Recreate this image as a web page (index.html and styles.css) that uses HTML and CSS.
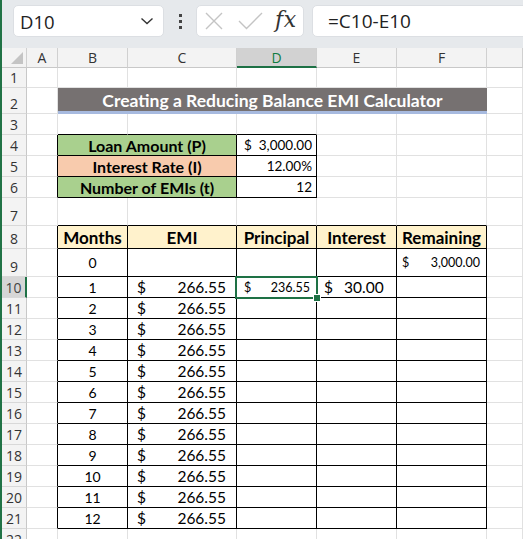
FILE: index.html
```html
<!DOCTYPE html>
<html>
<head>
<meta charset="utf-8">
<link rel="stylesheet" href="styles.css">
</head>
<body>
<div class="app">
  <div class="topbar">
    <div class="namebox">
      <span class="nb-text">D10</span>
      <svg class="chev" width="14" height="8" viewBox="0 0 14 8"><path d="M1.5 1.5 L7 6.5 L12.5 1.5" fill="none" stroke="#333" stroke-width="1.4"/></svg>
    </div>
    <div class="dots"><span></span><span></span><span></span></div>
    <div class="fxbox">
      <svg width="18" height="18" viewBox="0 0 18 18"><path d="M1 1 L17 17 M17 1 L1 17" stroke="#c4c4c4" stroke-width="1.4" fill="none"/></svg>
      <svg width="25" height="18" viewBox="0 0 25 18"><path d="M1 9 L8.5 16.5 L24 1" stroke="#c4c4c4" stroke-width="1.4" fill="none"/></svg>
      <span class="fx">fx</span>
    </div>
    <div class="formula">=C10-E10</div>
  </div>

  <div class="sheet">
    <!-- column header -->
    <div class="ch corner"><span class="tri"></span></div>
    <div class="ch">A</div>
    <div class="ch">B</div>
    <div class="ch">C</div>
    <div class="ch chsel">D</div>
    <div class="ch">E</div>
    <div class="ch">F</div>
    <div class="ch"></div>

    <!-- row 1 -->
    <div class="rh">1</div>
    <div class="c"></div><div class="c"></div><div class="c"></div><div class="c"></div><div class="c"></div><div class="c"></div><div class="c"></div>

    <!-- row 2 -->
    <div class="rh">2</div>
    <div class="c"></div>
    <div class="title">Creating a Reducing Balance EMI Calculator</div>
    <div class="c"></div>

    <!-- row 3 -->
    <div class="rh">3</div>
    <div class="c"></div><div class="c bb"></div><div class="c bb"></div><div class="c bb"></div><div class="c"></div><div class="c"></div><div class="c"></div>

    <!-- row 4 -->
    <div class="rh">4</div>
    <div class="c br"></div>
    <div class="t lbl green">Loan Amount (P)</div>
    <div class="t val acct4"><span>$</span><span>3,000.00</span></div>
    <div class="c"></div><div class="c"></div><div class="c"></div>

    <!-- row 5 -->
    <div class="rh">5</div>
    <div class="c br"></div>
    <div class="t lbl peach">Interest Rate (I)</div>
    <div class="t val right">12.00%</div>
    <div class="c"></div><div class="c"></div><div class="c"></div>

    <!-- row 6 -->
    <div class="rh">6</div>
    <div class="c br"></div>
    <div class="t lbl green">Number of EMIs (t)</div>
    <div class="t val right">12</div>
    <div class="c"></div><div class="c"></div><div class="c"></div>

    <!-- row 7 -->
    <div class="rh">7</div>
    <div class="c"></div><div class="c bb"></div><div class="c bb"></div><div class="c bb"></div><div class="c bb"></div><div class="c bb"></div><div class="c"></div>

    <!-- row 8 -->
    <div class="rh">8</div>
    <div class="c br"></div>
    <div class="t hd">Months</div>
    <div class="t hd">EMI</div>
    <div class="t hd">Principal</div>
    <div class="t hd">Interest</div>
    <div class="t hd">Remaining</div>
    <div class="c"></div>

    <!-- row 9 -->
    <div class="rh">9</div>
    <div class="c br"></div>
    <div class="t num">0</div>
    <div class="t"></div>
    <div class="t"></div>
    <div class="t"></div>
    <div class="t acct-s accF"><span>$</span><span>3,000.00</span></div>
    <div class="c"></div>

    <!-- row 10 -->
    <div class="rh rhsel">10</div>
    <div class="c br"></div>
    <div class="t num">1</div>
    <div class="t acct"><span>$</span><span>266.55</span></div>
    <div class="t acct-s accD sel"><span>$</span><span>236.55</span></div>
    <div class="t acct accE"><span>$</span><span>30.00</span></div>
    <div class="t"></div>
    <div class="c"></div>

    <div class="rh">11</div><div class="c br"></div><div class="t num">2</div><div class="t acct"><span>$</span><span>266.55</span></div><div class="t"></div><div class="t"></div><div class="t"></div><div class="c"></div>
    <div class="rh">12</div><div class="c br"></div><div class="t num">3</div><div class="t acct"><span>$</span><span>266.55</span></div><div class="t"></div><div class="t"></div><div class="t"></div><div class="c"></div>
    <div class="rh">13</div><div class="c br"></div><div class="t num">4</div><div class="t acct"><span>$</span><span>266.55</span></div><div class="t"></div><div class="t"></div><div class="t"></div><div class="c"></div>
    <div class="rh">14</div><div class="c br"></div><div class="t num">5</div><div class="t acct"><span>$</span><span>266.55</span></div><div class="t"></div><div class="t"></div><div class="t"></div><div class="c"></div>
    <div class="rh">15</div><div class="c br"></div><div class="t num">6</div><div class="t acct"><span>$</span><span>266.55</span></div><div class="t"></div><div class="t"></div><div class="t"></div><div class="c"></div>
    <div class="rh">16</div><div class="c br"></div><div class="t num">7</div><div class="t acct"><span>$</span><span>266.55</span></div><div class="t"></div><div class="t"></div><div class="t"></div><div class="c"></div>
    <div class="rh">17</div><div class="c br"></div><div class="t num">8</div><div class="t acct"><span>$</span><span>266.55</span></div><div class="t"></div><div class="t"></div><div class="t"></div><div class="c"></div>
    <div class="rh">18</div><div class="c br"></div><div class="t num">9</div><div class="t acct"><span>$</span><span>266.55</span></div><div class="t"></div><div class="t"></div><div class="t"></div><div class="c"></div>
    <div class="rh">19</div><div class="c br"></div><div class="t num">10</div><div class="t acct"><span>$</span><span>266.55</span></div><div class="t"></div><div class="t"></div><div class="t"></div><div class="c"></div>
    <div class="rh">20</div><div class="c br"></div><div class="t num">11</div><div class="t acct"><span>$</span><span>266.55</span></div><div class="t"></div><div class="t"></div><div class="t"></div><div class="c"></div>
    <div class="rh">21</div><div class="c br"></div><div class="t num">12</div><div class="t acct"><span>$</span><span>266.55</span></div><div class="t"></div><div class="t"></div><div class="t"></div><div class="c"></div>

    <div class="rh">22</div>
    <div class="c"></div><div class="c"></div><div class="c"></div><div class="c"></div><div class="c"></div><div class="c"></div><div class="c"></div>
  </div>
</div>
</body>
</html>
```
FILE: styles.css
```css
html, body {
  margin: 0;
  padding: 0;
  background: #ffffff;
  overflow: hidden;
}
.app {
  width: 523px;
  height: 539px;
  border-left: 2px solid #217346;
  box-sizing: border-box;
  overflow: hidden;
}
.topbar {
  height: 48px;
  background: #e6e9ec;
  display: flex;
  align-items: flex-start;
  padding-top: 5px;
  box-sizing: border-box;
}
.namebox {
  margin-left: 11px;
  width: 151px;
  height: 32px;
  background: #fff;
  border: 1px solid #dcdfe3;
  border-radius: 5px;
  box-sizing: border-box;
  display: flex;
  align-items: center;
  justify-content: space-between;
  padding: 0 9px 0 6px;
  font-family: "Open Sans", "Noto Sans", sans-serif;
  font-size: 18.5px;
  color: #222;
}
.dots {
  width: 32px;
  height: 32px;
  display: flex;
  flex-direction: column;
  align-items: center;
  justify-content: center;
  gap: 3px;
}
.dots span {
  width: 3px;
  height: 3px;
  background: #444;
}
.fxbox {
  width: 108px;
  height: 32px;
  background: #fff;
  border: 1px solid #dcdfe3;
  border-radius: 5px;
  box-sizing: border-box;
  display: flex;
  align-items: center;
  padding-left: 8px;
  gap: 15px;
}
.fx {
  font-family: "DejaVu Serif", "Liberation Serif", serif;
  font-style: italic;
  font-size: 22px;
  color: #333;
  margin-left: -3px;
  letter-spacing: 0.5px;
  line-height: 1;
  padding-bottom: 3px;
}
.formula {
  margin-left: 8px;
  flex: 1;
  margin-right: -12px;
  height: 32px;
  background: #fff;
  border: 1px solid #dcdfe3;
  border-radius: 5px;
  box-sizing: border-box;
  display: flex;
  align-items: center;
  padding-left: 15px;
  font-family: "Open Sans", "Noto Sans", sans-serif;
  font-size: 19px;
  color: #222;
}
.sheet {
  display: grid;
  grid-template-columns: 25px 31px 70px 109px 80px 80px 90px 36px;
  grid-template-rows: 20px 20px 26px 21px 21px 21px 21px 28px 23px 28px repeat(12, 21px) 21px;
  font-family: "Lato", "Open Sans", sans-serif;
  font-size: 15px;
  color: #000;
}
.sheet > div {
  box-sizing: border-box;
  min-width: 0;
}
.ch {
  background: #f3f3f3;
  border-right: 1px solid #d0d0d0;
  border-bottom: 1px solid #c8c8c8;
  font-family: "Open Sans", "Noto Sans", sans-serif;
  font-size: 14px;
  color: #333;
  display: flex;
  align-items: center;
  justify-content: center;
}
.corner {
  position: relative;
}
.tri {
  position: absolute;
  right: 3px;
  bottom: 3px;
  width: 0;
  height: 0;
  border-left: 12px solid transparent;
  border-bottom: 12px solid #c4c4c4;
}
.chsel {
  background: #d2d2d2;
  color: #107c41;
  border-bottom: 2px solid #1e7145;
}
.rh {
  background: #f3f3f3;
  border-right: 1px solid #c8c8c8;
  border-bottom: 1px solid #d8d8d8;
  font-family: "Open Sans", "Noto Sans", sans-serif;
  font-size: 14px;
  color: #333;
  display: flex;
  align-items: flex-end;
  justify-content: center;
  padding-bottom: 0;
}
.rhsel {
  background: #d6d6d6;
  color: #444;
  border-right: 2px solid #1e7145;
}
.c {
  border-right: 1px solid #e1e1e1;
  border-bottom: 1px solid #e1e1e1;
}
.c.bb {
  border-bottom-color: #000;
}
.c.br {
  border-right-color: #000;
}
.title {
  grid-column: span 5;
  background: #767171;
  border-bottom: 3px solid #a7badf;
  color: #fff;
  font-weight: bold;
  font-size: 17.5px;
  display: flex;
  align-items: center;
  justify-content: center;
  padding-top: 2px;
}
.t {
  border-right: 1px solid #000;
  border-bottom: 1px solid #000;
  display: flex;
  align-items: center;
}
.lbl {
  grid-column: span 2;
  justify-content: center;
  font-weight: bold;
  font-size: 16px;
}
.green { background: #a9d08e; }
.peach { background: #f8cbad; }
.val {
  font-size: 13.5px;
  padding: 0 4px 0 7px;
}
.right { justify-content: flex-end; }
.acct4 { justify-content: space-between; }
.hd {
  background: #fff2cc;
  justify-content: center;
  font-weight: bold;
  font-size: 17px;
}
.num {
  justify-content: center;
  font-size: 14px;
}
.acct {
  justify-content: space-between;
  padding: 0 10px 0 9px;
  font-size: 15.5px;
}
.accE {
  justify-content: flex-start;
  gap: 11px;
  padding-left: 7px;
}
.acct-s {
  justify-content: space-between;
  font-size: 12.5px;
  padding: 0 6px 0 7px;
}
.accF { padding: 0 6px 0 5px; }
.sel {
  position: relative;
}
.sel::after {
  content: "";
  position: absolute;
  left: -2px;
  top: -1px;
  right: -2px;
  bottom: -2px;
  border: 2px solid #1e7145;
}
.sel::before {
  content: "";
  position: absolute;
  right: -5px;
  bottom: -5px;
  width: 6px;
  height: 6px;
  background: #1e7145;
  border: 1px solid #fff;
  z-index: 2;
}
```
